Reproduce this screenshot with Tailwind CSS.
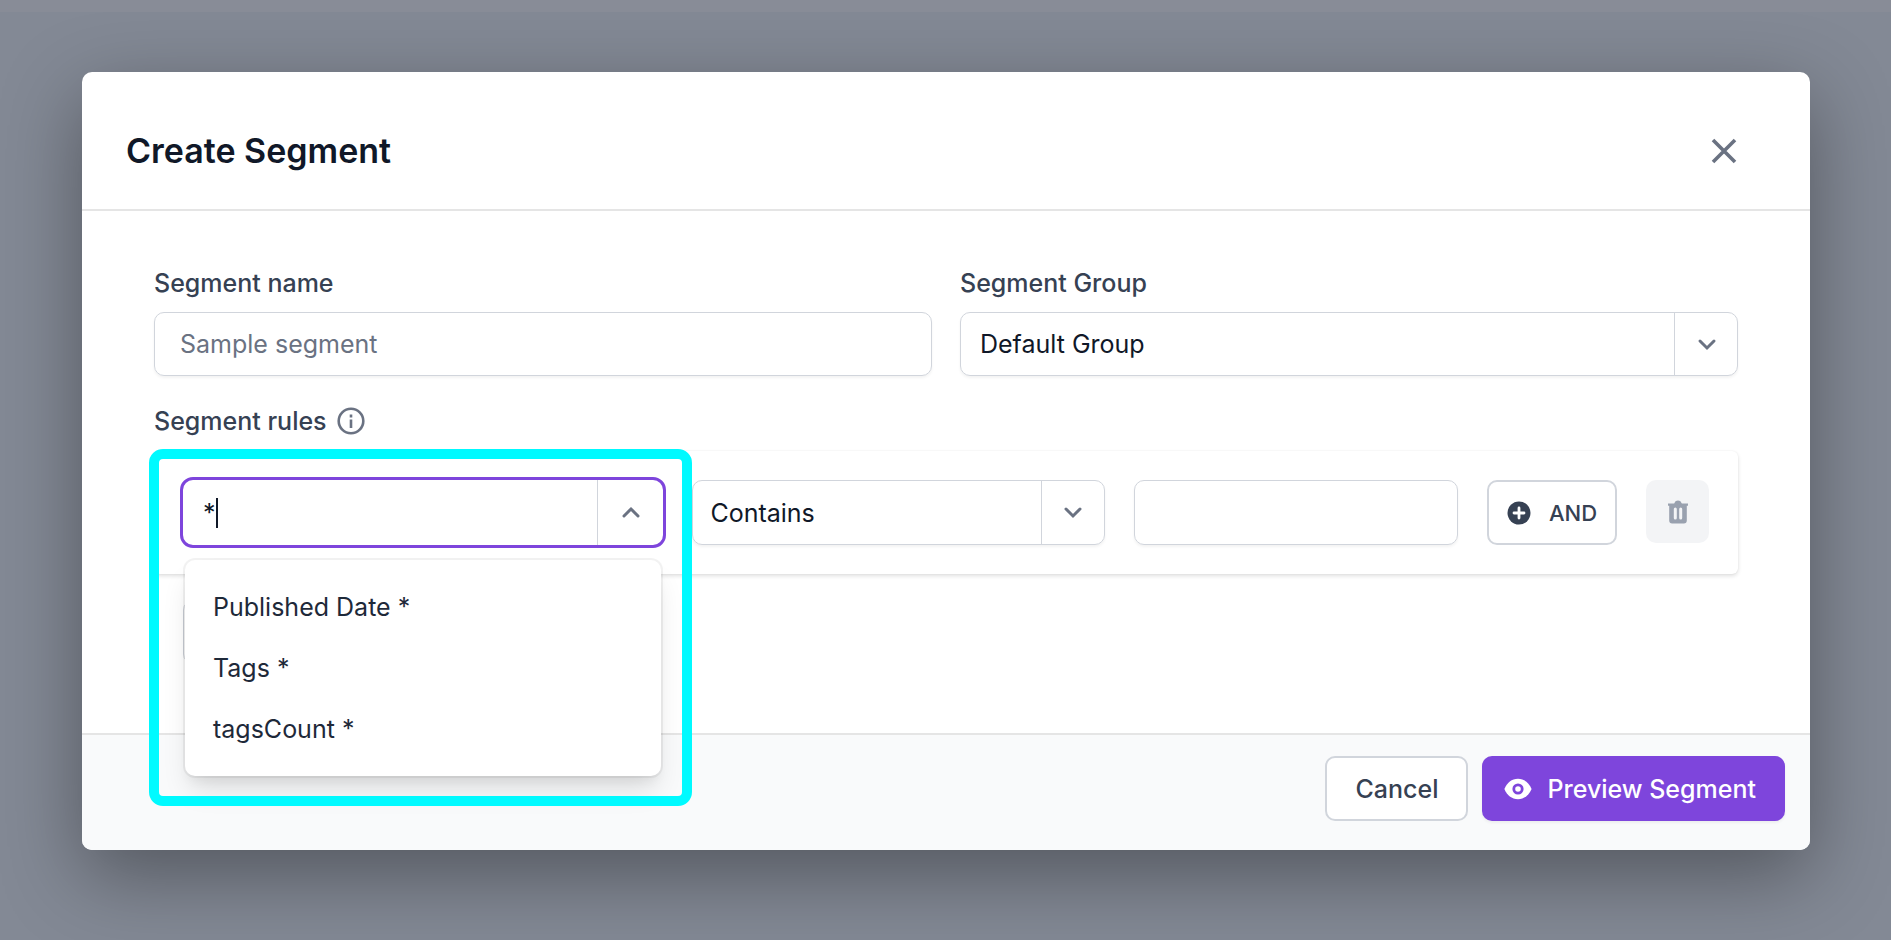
<!DOCTYPE html>
<html lang="en">
<head>
    <meta charset="UTF-8">
    <meta name="viewport" content="width=device-width, initial-scale=1.0">
    <title>Create Segment</title>
    <script src="https://cdn.jsdelivr.net/npm/@tailwindcss/browser@4"></script>
</head>

<body class="min-h-screen bg-[#838995] border-t-[12px] border-[#888c97] pl-[82px] pr-[81px] pt-[60px] pb-[90px] font-['Inter','Liberation_Sans',sans-serif] text-[25px] leading-8 text-gray-700">

    <div role="dialog" aria-labelledby="dialog-title" class="bg-white rounded-[10px] shadow-[0_25px_80px_rgba(0,0,0,0.37)]">

        <!-- Header -->
        <div class="flex items-center justify-between h-[139px] pl-11 pr-[72px] pt-5 border-b-2 border-[#e5e5e5]">
            <h1 id="dialog-title" class="text-[34px] leading-10 font-semibold text-gray-900">Create Segment</h1>
            <button type="button" aria-label="Close" class="text-gray-500">
                <svg class="w-7 h-7" viewBox="0 0 28 28" fill="none" stroke="currentColor" stroke-width="3.6">
                    <path d="M3 3l22 22M25 3L3 25"/>
                </svg>
            </button>
        </div>

        <!-- Form -->
        <div class="px-[72px] pt-14 pb-[69px]">
            <div class="grid grid-cols-2 gap-7">
                <div>
                    <label for="segment-name" class="block mb-[13px] font-medium">Segment name</label>
                    <input id="segment-name" type="text" placeholder="Sample segment" class="block w-full h-16 px-[25px] border border-gray-300 rounded-[10px] shadow-[0_2px_3px_rgba(0,0,0,0.05)] outline-none placeholder-gray-500">
                </div>
                <div>
                    <label for="segment-group" class="block mb-[13px] font-medium">Segment Group</label>
                    <div class="relative">
                        <select id="segment-group" class="block w-full h-16 pl-[19px] pr-20 border border-gray-300 rounded-[10px] shadow-[0_2px_3px_rgba(0,0,0,0.05)] appearance-none outline-none text-gray-900">
                            <option>Default Group</option>
                        </select>
                        <span class="absolute inset-y-0 right-0 w-16 border-l border-gray-300 flex items-center justify-center pointer-events-none text-gray-500">
                            <svg class="w-5 h-5" viewBox="0 0 20 20" fill="none" stroke="currentColor" stroke-width="3" stroke-linecap="round"><path d="M3 7l7 7 7-7"/></svg>
                        </span>
                    </div>
                </div>
            </div>

            <div class="flex items-center gap-2.5 mt-[29px] mb-3.5">
                <label for="rule-field" class="font-medium">Segment rules</label>
                <svg class="w-7 h-7 text-gray-500" viewBox="0 0 28 28" fill="none" stroke="currentColor" stroke-width="2.6">
                    <circle cx="14" cy="14" r="12.300"/>
                    <path d="M14 12.500v8.500"/>
                    <path d="M14 7.500v3"/>
                </svg>
            </div>

            <div class="grid grid-cols-[480fr_412fr_324fr_130px_63px] gap-[29px] p-[29px] rounded-md shadow-[0_2px_4px_rgba(0,0,0,0.13),0_0_2px_rgba(0,0,0,0.06)]">
                <!-- Field picker, open -->
                <div class="relative">
                    <div class="flex h-[65px] rounded-[10px] outline-3 outline-[#7e45dc]">
                        <div class="flex flex-1 items-center pl-5 text-gray-900">
                            <input id="rule-field" type="text" role="combobox" aria-expanded="true" aria-controls="field-list" value="*" class="field-sizing-content outline-none">
                            <span class="w-0.5 h-[30px] bg-gray-900"></span>
                        </div>
                        <button type="button" aria-label="Close field list" class="w-[66px] border-l border-gray-300 flex items-center justify-center text-gray-500">
                            <svg class="w-5 h-5" viewBox="0 0 20 20" fill="none" stroke="currentColor" stroke-width="3" stroke-linecap="round"><path d="M3 13l7-7 7 7"/></svg>
                        </button>
                    </div>
                    <ul id="field-list" role="listbox" class="absolute z-10 top-20 inset-x-0.5 h-[216px] pt-4 bg-white rounded-[10px] text-gray-800 shadow-[0_0_0_2px_rgba(0,0,0,0.05),0_18px_28px_-5px_rgba(0,0,0,0.12),0_8px_12px_-4px_rgba(0,0,0,0.06)]">
                        <li role="option" class="h-[61px] px-7 flex items-center">Published Date *</li>
                        <li role="option" class="h-[61px] px-7 flex items-center">Tags *</li>
                        <li role="option" class="h-[61px] px-7 flex items-center">tagsCount *</li>
                    </ul>
                    <!-- Highlight frame -->
                    <div class="absolute z-20 -top-[31px] -left-[34px] -right-[29px] h-[357px] border-10 border-[#00faff] rounded-[14px] pointer-events-none"></div>
                </div>

                <div class="relative">
                    <select aria-label="Condition" class="block w-full h-[65px] pl-[17px] pr-20 border border-gray-300 rounded-[10px] shadow-[0_2px_3px_rgba(0,0,0,0.05)] appearance-none outline-none text-gray-900">
                        <option>Contains</option>
                    </select>
                    <span class="absolute inset-y-0 right-0 w-16 border-l border-gray-300 flex items-center justify-center pointer-events-none text-gray-500">
                        <svg class="w-5 h-5" viewBox="0 0 20 20" fill="none" stroke="currentColor" stroke-width="3" stroke-linecap="round"><path d="M3 6l7 7 7-7"/></svg>
                    </span>
                </div>

                <input type="text" aria-label="Value" class="block w-full h-[65px] px-5 border border-gray-300 rounded-[10px] shadow-[0_2px_3px_rgba(0,0,0,0.05)] outline-none">

                <button type="button" class="h-[65px] flex items-center justify-center gap-[18px] border-2 border-gray-300 rounded-[10px] text-[22px] font-medium">
                    <svg class="w-6 h-6" viewBox="0 0 24 24">
                        <circle cx="12" cy="12" r="11.5" fill="currentColor"/>
                        <path d="M12 7v10M7 12h10" stroke="#fff" stroke-width="2.8" stroke-linecap="round"/>
                    </svg>
                    AND
                </button>

                <button type="button" aria-label="Delete rule" class="h-[63px] flex items-center justify-center bg-gray-100 rounded-[10px] text-gray-400">
                    <svg class="w-6 h-6" viewBox="0 0 24 24" fill="currentColor">
                        <path fill-rule="evenodd" d="M2 3.5h5.500c.5 0 .8-.2 1-.6C9.300 1.300 10.400.5 12 .5s2.700.8 3.500 2.400c.2.4.5.6 1 .6H22v2.300h-1.200V20.500a3 3 0 0 1-3 3H6.200a3 3 0 0 1-3-3V5.800H2zM9.300 7.500a1.500 1.500 0 0 0-1.500 1.500v9a1.500 1.500 0 0 0 3 0V9a1.500 1.500 0 0 0-1.500-1.500zM14.700 7.500a1.500 1.500 0 0 0-1.500 1.500v9a1.500 1.500 0 0 0 3 0V9a1.500 1.500 0 0 0-1.500-1.500z"/>
                    </svg>
                </button>
            </div>

            <div class="ml-[29px] mt-[26px] w-32 h-16 border border-gray-300 rounded-[10px]"></div>
        </div>

        <!-- Footer -->
        <div class="flex justify-end gap-3.5 px-[25px] pt-[21px] pb-[29px] bg-gray-50 border-t-2 border-[#e5e5e5] rounded-b-[10px]">
            <button type="button" class="h-[65px] px-7 bg-white border-2 border-gray-300 rounded-[10px] font-medium">Cancel</button>
            <button type="button" class="h-[65px] pl-[22px] pr-[29px] flex items-center gap-[15px] bg-[#7e45dc] rounded-[10px] shadow-[0_2px_3px_rgba(0,0,0,0.05)] font-medium text-white">
                <svg class="w-7 h-7" viewBox="0 0 28 28">
                    <path fill="currentColor" d="M14 3.800c6.300 0 11 4 13.600 10.200C25 20.200 20.300 24.200 14 24.200S3 20.200.4 14C3 7.800 7.700 3.800 14 3.800z"/>
                    <circle cx="14" cy="14" r="4.200" fill="none" stroke="#7e45dc" stroke-width="2.800"/>
                </svg>
                Preview Segment
            </button>
        </div>
    </div>

</body>
</html>
